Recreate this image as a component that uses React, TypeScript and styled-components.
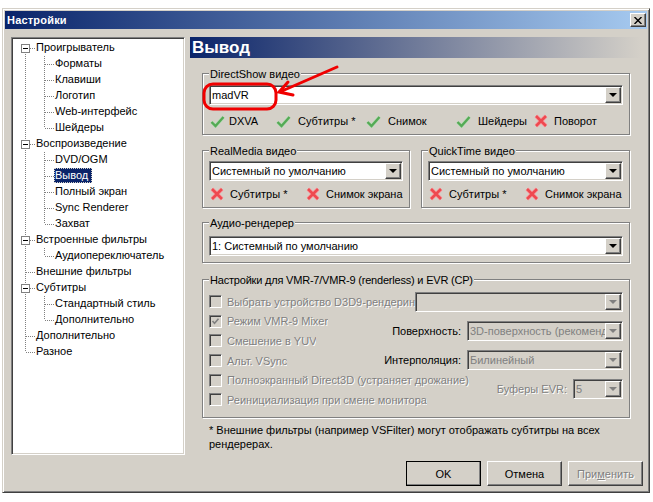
import React from 'react';
import styled, { createGlobalStyle, css } from 'styled-components';

const face = `#d4d0c8`;
const shadow = `#808080`;
const darkShadow = `#404040`;
const navy = `#0a246a`;

const GlobalStyle = createGlobalStyle`
  html, body {
    margin: 0;
    background: #fff;
    font-family: 'Liberation Sans', Arial, sans-serif;
    font-size: 11px;
    color: #000;
  }
`;

const Page = styled.div`
  position: relative;
  width: 653px;
  height: 502px;
  padding: 8px 3px 9px 2px;
  box-sizing: border-box;
  overflow: hidden;
`;

const Dialog = styled.div`
  height: 485px;
  box-sizing: border-box;
  background: ${face};
  padding: 1px;
  border: 1px solid;
  border-color: ${face} ${darkShadow} ${darkShadow} ${face};
  box-shadow: inset 1px 1px 0 #fff, inset -1px -1px 0 ${shadow};
`;

const TitleBar = styled.div`
  display: flex;
  align-items: center;
  justify-content: space-between;
  height: 18px;
  margin: 1px 1px 0;
  padding: 0 1px 0 2px;
  background: linear-gradient(to right, ${navy}, #a6caf0);
  color: #fff;
  font-weight: bold;
  letter-spacing: 0.2px;
`;

const raised = css`
  background: ${face};
  border: 1px solid;
  border-color: #fff ${darkShadow} ${darkShadow} #fff;
  box-shadow: inset -1px -1px 0 ${shadow}, inset 1px 1px 0 ${face};
  box-sizing: border-box;
`;

const CloseButton = styled.div`
  ${raised}
  display: flex;
  align-items: center;
  justify-content: center;
  width: 16px;
  height: 14px;
`;

const Body = styled.div`
  display: flex;
  gap: 5px;
  padding: 8px 5px 0 7px;
`;

const sunken = css`
  border: 1px solid;
  border-color: ${shadow} #fff #fff ${shadow};
  box-sizing: border-box;
`;

const TreeBox = styled.div`
  ${sunken}
  width: 174px;
  height: 418px;
  flex: none;
  background: #fff;
  box-shadow: inset 1px 1px 0 ${darkShadow}, inset -1px -1px 0 ${face};
  padding: 2px 2px;
`;

const TreeRow = styled.div`
  position: relative;
  height: 16px;
`;

const TreeLabel = styled.span<{ $level: number; $selected?: boolean }>`
  position: absolute;
  top: 0;
  left: ${({ $level }) => ($level === 0 ? 21 : 40)}px;
  height: 15px;
  line-height: 15px;
  padding: 0 1px;
  white-space: nowrap;
  ${({ $selected }) =>
    $selected &&
    css`
      padding-right: 4px;
      background: ${navy};
      color: #fff;
      outline: 1px dotted #d4d0c8;
      outline-offset: -1px;
    `}
`;

const guideV = css`
  position: absolute;
  width: 1px;
  background: linear-gradient(to bottom, ${shadow} 50%, transparent 50%) 0 0 / 1px 2px;
`;

const guideH = css`
  position: absolute;
  top: 8px;
  height: 1px;
  background: linear-gradient(to right, ${shadow} 50%, transparent 50%) 0 0 / 2px 1px;
`;

const partStyles = {
  full: `top: 0; height: 16px;`,
  upper: `top: 0; height: 8px;`,
  lower: `top: 8px; height: 8px;`,
};

type Part = keyof typeof partStyles;

const Trunk = styled.i<{ $part: Part }>`
  ${guideV}
  left: 11px;
  ${({ $part }) => partStyles[$part]}
`;

const Branch = styled.i<{ $part: Part }>`
  ${guideV}
  left: 30px;
  ${({ $part }) => partStyles[$part]}
`;

const TrunkTick = styled.i`
  ${guideH}
  left: 12px;
  width: 9px;
`;

const BranchTick = styled.i`
  ${guideH}
  left: 31px;
  width: 9px;
`;

const Expander = styled.i`
  position: absolute;
  left: 7px;
  top: 4px;
  width: 9px;
  height: 9px;
  box-sizing: border-box;
  border: 1px solid ${shadow};
  background: #fff;
  &::after {
    content: '';
    position: absolute;
    left: 1px;
    top: 3px;
    width: 5px;
    height: 1px;
    background: #000;
  }
`;

const Content = styled.div`
  flex: 1;
  min-width: 0;
`;

const Header = styled.div`
  height: 21px;
  margin-right: 2px;
  padding-left: 2px;
  background: linear-gradient(to right, ${navy}, ${face});
  color: #fff;
  font-size: 17px;
  font-weight: bold;
  line-height: 21px;
`;

const Groups = styled.div`
  display: flex;
  flex-direction: column;
  width: 428px;
  margin: 15px 0 0 12px;
`;

const GroupBox = styled.div<{ $height: number; $top?: number; $width?: number; $pad?: number }>`
  position: relative;
  height: ${({ $height }) => $height}px;
  width: ${({ $width }) => ($width ? `${$width}px` : `auto`)};
  margin-top: ${({ $top }) => $top ?? 0}px;
  box-sizing: border-box;
  border: 1px solid ${shadow};
  box-shadow: 1px 1px 0 #fff, inset 1px 1px 0 #fff;
  padding: ${({ $pad }) => $pad ?? 11}px 6px 0;
`;

const GroupRow = styled.div`
  display: flex;
  justify-content: space-between;
  margin-top: 15px;
`;

const Legend = styled.span<{ $tight?: boolean }>`
  position: absolute;
  left: 6px;
  top: -6px;
  padding: 0 1px;
  background: ${face};
  line-height: 13px;
  white-space: nowrap;
  letter-spacing: ${({ $tight }) => ($tight ? `-0.2px` : `0`)};
`;

const ComboBox = styled.div<{ $disabled?: boolean; $width?: number }>`
  ${sunken}
  display: flex;
  align-items: center;
  justify-content: space-between;
  height: 20px;
  width: ${({ $width }) => ($width ? `${$width}px` : `auto`)};
  flex: none;
  padding: 0 1px 0 2px;
  background: ${({ $disabled }) => ($disabled ? face : `#fff`)};
  color: ${({ $disabled }) => ($disabled ? shadow : `#000`)};
  box-shadow: inset 1px 1px 0 ${darkShadow}, inset -1px -1px 0 ${face};
`;

const ComboText = styled.span`
  flex: 1;
  min-width: 0;
  overflow: hidden;
  white-space: nowrap;
`;

const ComboArrow = styled.div<{ $disabled?: boolean }>`
  ${raised}
  position: relative;
  flex: none;
  width: 16px;
  height: 16px;
  &::after {
    content: '';
    position: absolute;
    left: 3px;
    top: 5px;
    border-style: solid;
    border-width: 4px 4px 0;
    border-color: ${({ $disabled }) => ($disabled ? shadow : `#000`)} transparent transparent;
  }
`;

const StatusRow = styled.div<{ $top: number }>`
  display: flex;
  align-items: center;
  height: 16px;
  margin-top: ${({ $top }) => $top}px;
  padding-left: 1px;
`;

const StatusItem = styled.div<{ $width: number; $gap: number }>`
  display: flex;
  align-items: center;
  flex: none;
  gap: ${({ $gap }) => $gap}px;
  width: ${({ $width }) => $width}px;
  white-space: nowrap;
`;

const RenderSettings = styled.div`
  display: flex;
  margin-top: 1px;
`;

const OptionList = styled.div`
  display: flex;
  flex-direction: column;
  width: 206px;
  flex: none;
`;

const Option = styled.div<{ $clip?: boolean }>`
  display: flex;
  align-items: center;
  gap: 5px;
  height: 19.6px;
  white-space: nowrap;
  color: ${shadow};
  text-shadow: 1px 1px 0 #fff;
  width: ${({ $clip }) => ($clip ? `206px` : `max-content`)};
  overflow: hidden;
`;

const CheckBox = styled.i`
  ${sunken}
  display: flex;
  align-items: center;
  justify-content: center;
  flex: none;
  width: 13px;
  height: 13px;
  background: ${face};
  box-shadow: inset 1px 1px 0 ${darkShadow}, inset -1px -1px 0 ${face};
`;

const ComboList = styled.div`
  flex: 1;
  display: flex;
  flex-direction: column;
  gap: 9px;
  min-width: 0;
`;

const LabeledCombo = styled.div`
  display: flex;
  align-items: center;
  justify-content: flex-end;
  gap: 6px;
  position: relative;
  white-space: nowrap;
`;

const DisabledLabel = styled.span`
  color: ${shadow};
  text-shadow: 1px 1px 0 #fff;
`;

const Note = styled.p`
  margin: 5px 0 0 7px;
  width: 420px;
  line-height: 14px;
`;

const Footer = styled.div`
  display: flex;
  justify-content: flex-end;
  gap: 6px;
  margin-top: 10px;
`;

const Button = styled.div<{ $default?: boolean; $disabled?: boolean }>`
  ${raised}
  display: flex;
  align-items: center;
  justify-content: center;
  width: 75px;
  height: 25px;
  ${({ $default }) =>
    $default &&
    css`
      outline: 1px solid #000;
      outline-offset: -1px;
    `}
  ${({ $disabled }) =>
    $disabled &&
    css`
      color: ${shadow};
      text-shadow: 1px 1px 0 #fff;
    `}
`;

const Annotation = styled.svg`
  position: absolute;
  left: 0;
  top: 0;
  pointer-events: none;
`;

const Underlined = styled.span`
  text-decoration: underline;
`;

function CheckIcon() {
  return (
    <svg width="15" height="13" viewBox="0 0 15 13">
      <path d="M1.5 7 L5.5 11 L13.5 2" fill="none" stroke="#b9dcb9" strokeWidth="3.6" />
      <path d="M1.5 7 L5.5 11 L13.5 2" fill="none" stroke="#55aa55" strokeWidth="2.4" />
    </svg>
  );
}

function CrossIcon() {
  return (
    <svg width="14" height="14" viewBox="0 0 14 14">
      <path d="M2 2 L12 12 M12 2 L2 12" fill="none" stroke="#f8a0a4" strokeWidth="4" />
      <path d="M2 2 L12 12 M12 2 L2 12" fill="none" stroke="#ee4a50" strokeWidth="2.6" />
    </svg>
  );
}

const tree = [
  { label: `Проигрыватель`, level: 0, box: true },
  { label: `Форматы`, level: 1 },
  { label: `Клавиши`, level: 1 },
  { label: `Логотип`, level: 1 },
  { label: `Web-интерфейс`, level: 1 },
  { label: `Шейдеры`, level: 1 },
  { label: `Воспроизведение`, level: 0, box: true },
  { label: `DVD/OGM`, level: 1 },
  { label: `Вывод`, level: 1, selected: true },
  { label: `Полный экран`, level: 1 },
  { label: `Sync Renderer`, level: 1 },
  { label: `Захват`, level: 1 },
  { label: `Встроенные фильтры`, level: 0, box: true },
  { label: `Аудиопереключатель`, level: 1 },
  { label: `Внешние фильтры`, level: 0 },
  { label: `Субтитры`, level: 0, box: true },
  { label: `Стандартный стиль`, level: 1 },
  { label: `Дополнительно`, level: 1 },
  { label: `Дополнительно`, level: 0 },
  { label: `Разное`, level: 0 },
];

function Status({
  ok,
  width,
  gap,
  children,
}: {
  ok: boolean;
  width: number;
  gap: number;
  children: React.ReactNode;
}) {
  return (
    <StatusItem $width={width} $gap={gap}>
      {ok ? <CheckIcon /> : <CrossIcon />}
      {children}
    </StatusItem>
  );
}

function Combo({ text, disabled, width }: { text: string; disabled?: boolean; width?: number }) {
  return (
    <ComboBox $disabled={disabled} $width={width}>
      <ComboText>{text}</ComboText>
      <ComboArrow $disabled={disabled} />
    </ComboBox>
  );
}

function OptionItem({ label, checked, clip }: { label: string; checked?: boolean; clip?: boolean }) {
  return (
    <Option $clip={clip}>
      <CheckBox>
        {checked && (
          <svg width="9" height="9" viewBox="0 0 9 9">
            <path d="M1.5 4 L3.5 6.2 L7.5 1.8" fill="none" stroke="#808080" strokeWidth="1.6" />
          </svg>
        )}
      </CheckBox>
      {label}
    </Option>
  );
}

export default function App() {
  return (
    <Page>
      <GlobalStyle />
      <Dialog>
        <TitleBar>
          Настройки
          <CloseButton>
            <svg width="8" height="7" viewBox="0 0 8 7">
              <path d="M0.5 0 L7.5 7 M7.5 0 L0.5 7" stroke="#000" strokeWidth="1.4" />
            </svg>
          </CloseButton>
        </TitleBar>
        <Body>
          <TreeBox>
            {tree.map((item, i) => {
              const next = tree[i + 1];
              const isLast = i === tree.length - 1;
              const lastChild = item.level === 1 && next?.level !== 1;
              return (
                <TreeRow key={i}>
                  <Trunk $part={i === 0 ? `lower` : isLast ? `upper` : `full`} />
                  {item.level === 1 && <Branch $part={lastChild ? `upper` : `full`} />}
                  {item.level === 0 ? <TrunkTick /> : <BranchTick />}
                  {item.box && <Expander />}
                  <TreeLabel $level={item.level} $selected={item.selected}>
                    {item.label}
                  </TreeLabel>
                </TreeRow>
              );
            })}
          </TreeBox>
          <Content>
            <Header>Вывод</Header>
            <Groups>
              <GroupBox $height={62}>
                <Legend>DirectShow видео</Legend>
                <Combo text="madVR" />
                <StatusRow $top={8}>
                  <Status ok width={66} gap={4}>DXVA</Status>
                  <Status ok width={90} gap={7}>Субтитры *</Status>
                  <Status ok width={90} gap={7}>Снимок</Status>
                  <Status ok width={78} gap={7}>Шейдеры</Status>
                  <Status ok={false} width={70} gap={6}>Поворот</Status>
                </StatusRow>
              </GroupBox>
              <GroupRow>
                <GroupBox $height={58} $width={208} $pad={10}>
                  <Legend>RealMedia видео</Legend>
                  <Combo text="Системный по умолчанию" />
                  <StatusRow $top={5}>
                    <Status ok={false} width={96} gap={6}>Субтитры *</Status>
                    <Status ok={false} width={100} gap={6}>Снимок экрана</Status>
                  </StatusRow>
                </GroupBox>
                <GroupBox $height={58} $width={209} $pad={10}>
                  <Legend>QuickTime видео</Legend>
                  <Combo text="Системный по умолчанию" />
                  <StatusRow $top={5}>
                    <Status ok={false} width={96} gap={6}>Субтитры *</Status>
                    <Status ok={false} width={100} gap={6}>Снимок экрана</Status>
                  </StatusRow>
                </GroupBox>
              </GroupRow>
              <GroupBox $height={41} $top={14} $pad={13}>
                <Legend>Аудио-рендерер</Legend>
                <Combo text="1: Системный по умолчанию" />
              </GroupBox>
              <GroupBox $height={139} $top={16}>
                <Legend $tight>Настройки для VMR-7/VMR-9 (renderless) и EVR (CP)</Legend>
                <RenderSettings>
                  <OptionList>
                    <OptionItem label="Выбрать устройство D3D9-рендеринга" clip />
                    <OptionItem label="Режим VMR-9 Mixer" checked />
                    <OptionItem label="Смешение в YUV" />
                    <OptionItem label="Альт. VSync" />
                    <OptionItem label="Полноэкранный Direct3D (устраняет дрожание)" />
                    <OptionItem label="Реинициализация при смене монитора" />
                  </OptionList>
                  <ComboList>
                    <Combo text="" disabled />
                    <LabeledCombo>
                      Поверхность:
                      <Combo text="3D-поверхность (рекомендуется)" disabled width={156} />
                    </LabeledCombo>
                    <LabeledCombo>
                      Интерполяция:
                      <Combo text="Билинейный" disabled width={156} />
                    </LabeledCombo>
                    <LabeledCombo>
                      <DisabledLabel>Буферы EVR:</DisabledLabel>
                      <Combo text="5" disabled width={50} />
                    </LabeledCombo>
                  </ComboList>
                </RenderSettings>
              </GroupBox>
              <Note>* Внешние фильтры (например VSFilter) могут отображать субтитры на всех рендерерах.</Note>
            </Groups>
            <Footer>
              <Button $default>OK</Button>
              <Button>Отмена</Button>
              <Button $disabled>
                <span>
                  При<Underlined>м</Underlined>енить
                </span>
              </Button>
            </Footer>
          </Content>
        </Body>
      </Dialog>
      <Annotation width="653" height="502" viewBox="0 0 653 502">
        <rect x="204" y="84" width="72" height="25" rx="9" fill="none" stroke="#f00000" strokeWidth="3" />
        <path d="M337 67 L282 91 M288 82 L279 92 L293 95" fill="none" stroke="#f00000" strokeWidth="3" strokeLinecap="round" />
      </Annotation>
    </Page>
  );
}
